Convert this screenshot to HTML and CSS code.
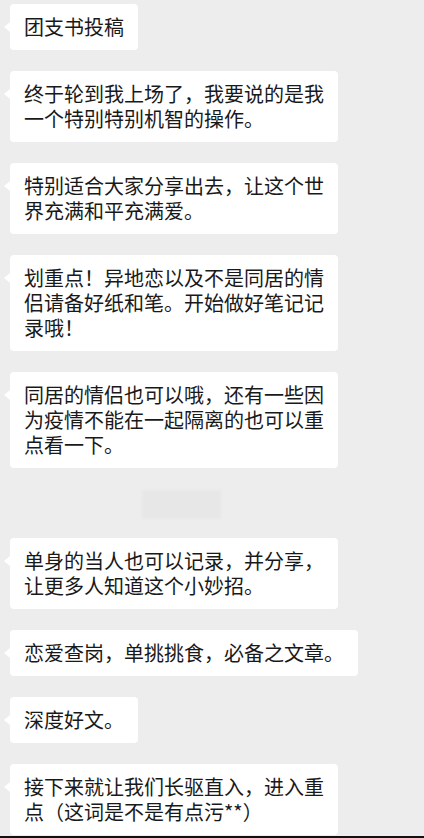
FILE: index.html
```html
<!DOCTYPE html>
<html lang="zh-CN">
<head>
  <meta charset="UTF-8" />
  <meta name="viewport" content="width=device-width, initial-scale=1.0"/>
  <title>聊天记录</title>
  <link rel="stylesheet" href="styles.css">
</head>
<body>

  <div class="chat">
    <div class="msg">团支书投稿</div>
    <div class="msg">终于轮到我上场了，我要说的是我<br>一个特别特别机智的操作。</div>
    <div class="msg">特别适合大家分享出去，让这个世<br>界充满和平充满爱。</div>
    <div class="msg">划重点！异地恋以及不是同居的情<br>侣请备好纸和笔。开始做好笔记记<br>录哦！</div>
    <div class="msg">同居的情侣也可以哦，还有一些因<br>为疫情不能在一起隔离的也可以重<br>点看一下。</div>
    <div class="time-mask"></div>
    <div class="msg">单身的当人也可以记录，并分享，<br>让更多人知道这个小妙招。</div>
    <div class="msg">恋爱查岗，单挑挑食，必备之文章。</div>
    <div class="msg">深度好文。</div>
    <div class="msg">接下来就让我们长驱直入，进入重<br>点（这词是不是有点污**）</div>
  </div>
  <div class="bottom-edge"></div>

</body>
</html>
```

FILE: styles.css
```css
html, body {
  margin: 0;
  padding: 0;
}

body {
  background-color: #ededed;
  color: #191919;
  font-family: "Noto Sans CJK SC", "Noto Sans", sans-serif;
  width: 424px;
  height: 838px;
  overflow: hidden;
}

.chat {
  height: 836px;
  overflow: hidden;
  box-sizing: border-box;
  padding: 4px 0 0 10px;
  display: flex;
  flex-direction: column;
  align-items: flex-start;
  gap: 21px;
}

.msg {
  position: relative;
  background-color: #ffffff;
  border-radius: 4px;
  padding: 10px 14px 11px;
  font-size: 20px;
  line-height: 25px;
  white-space: nowrap;
}

/* little tail on the left */
.msg::before {
  content: "";
  position: absolute;
  left: -6px;
  top: 18px;
  border-top: 5px solid transparent;
  border-bottom: 5px solid transparent;
  border-right: 6px solid #ffffff;
}

/* blurred-out timestamp */
.time-mask {
  width: 79px;
  height: 29px;
  margin: 1px 0 -2px 132px;
  background-color: #e7e7e7;
  filter: blur(1px);
}

.bottom-edge {
  height: 2px;
  background-color: #111;
}
```
